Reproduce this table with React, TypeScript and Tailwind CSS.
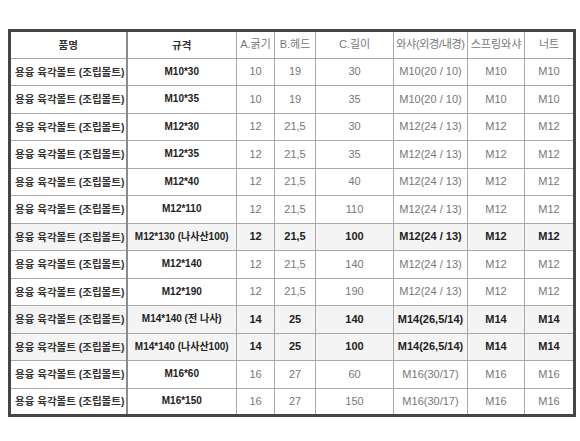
const rows: { spec: string; a: string; b: string; c: string; washer: string; spring: string; nut: string; hl?: boolean }[] = [
  { spec: "M10*30", a: "10", b: "19", c: "30", washer: "M10(20 / 10)", spring: "M10", nut: "M10" },
  { spec: "M10*35", a: "10", b: "19", c: "35", washer: "M10(20 / 10)", spring: "M10", nut: "M10" },
  { spec: "M12*30", a: "12", b: "21,5", c: "30", washer: "M12(24 / 13)", spring: "M12", nut: "M12" },
  { spec: "M12*35", a: "12", b: "21,5", c: "35", washer: "M12(24 / 13)", spring: "M12", nut: "M12" },
  { spec: "M12*40", a: "12", b: "21,5", c: "40", washer: "M12(24 / 13)", spring: "M12", nut: "M12" },
  { spec: "M12*110", a: "12", b: "21,5", c: "110", washer: "M12(24 / 13)", spring: "M12", nut: "M12" },
  { spec: "M12*130 (나사산100)", a: "12", b: "21,5", c: "100", washer: "M12(24 / 13)", spring: "M12", nut: "M12", hl: true },
  { spec: "M12*140", a: "12", b: "21,5", c: "140", washer: "M12(24 / 13)", spring: "M12", nut: "M12" },
  { spec: "M12*190", a: "12", b: "21,5", c: "190", washer: "M12(24 / 13)", spring: "M12", nut: "M12" },
  { spec: "M14*140 (전 나사)", a: "14", b: "25", c: "140", washer: "M14(26,5/14)", spring: "M14", nut: "M14", hl: true },
  { spec: "M14*140 (나사산100)", a: "14", b: "25", c: "100", washer: "M14(26,5/14)", spring: "M14", nut: "M14", hl: true },
  { spec: "M16*60", a: "16", b: "27", c: "60", washer: "M16(30/17)", spring: "M16", nut: "M16" },
  { spec: "M16*150", a: "16", b: "27", c: "150", washer: "M16(30/17)", spring: "M16", nut: "M16" },
];

const cell = "border border-[#a8a8a8] h-[27.5px] p-0 text-center";

export default function App() {
  return (
    <div className="bg-white w-[580px] h-[441px] pl-[8px] pt-[29px] text-[11px] leading-none" style={{ fontFamily: '"Liberation Sans", "Noto Sans CJK KR", sans-serif' }}>
      <table className="w-[565px] table-fixed border-collapse border-[3px] border-[#464646]">
        <colgroup>
          <col className="w-[117px]" />
          <col className="w-[110px]" />
          <col className="w-[38px]" />
          <col className="w-[41px]" />
          <col className="w-[78px]" />
          <col className="w-[74px]" />
          <col className="w-[57px]" />
          <col className="w-[50px]" />
        </colgroup>
        <thead>
          <tr className="text-[#777]">
            <th className={`${cell} border-r-2 border-r-[#8c8c8c] font-bold text-[#333] text-[10.5px]`}>품명</th>
            <th className={`${cell} font-bold text-[#333] text-[10.5px]`}>규격</th>
            <th className={`${cell} font-normal`}>A.굵기</th>
            <th className={`${cell} font-normal`}>B.헤드</th>
            <th className={`${cell} font-normal`}>C.길이</th>
            <th className={`${cell} font-normal tracking-[-0.3px] whitespace-nowrap`}>와샤(외경/내경)</th>
            <th className={`${cell} font-normal`}>스프링와샤</th>
            <th className={`${cell} font-normal`}>너트</th>
          </tr>
        </thead>
        <tbody>
          {rows.map((r, i) => (
            <tr key={i} className={r.hl ? "bg-[#f4f4f4] font-bold text-[#222]" : "text-[#777]"}>
              <td className={`${cell} border-r-2 border-r-[#8c8c8c] text-left pl-[4px] font-bold text-[#333] text-[10.5px] whitespace-nowrap`}>용융 육각볼트 (조립볼트)</td>
              <td className={`${cell} font-bold text-[#222] text-[10px] whitespace-nowrap`}>{r.spec}</td>
              <td className={cell}>{r.a}</td>
              <td className={cell}>{r.b}</td>
              <td className={cell}>{r.c}</td>
              <td className={`${cell} whitespace-nowrap`}>{r.washer}</td>
              <td className={cell}>{r.spring}</td>
              <td className={cell}>{r.nut}</td>
            </tr>
          ))}
        </tbody>
      </table>
    </div>
  );
}
